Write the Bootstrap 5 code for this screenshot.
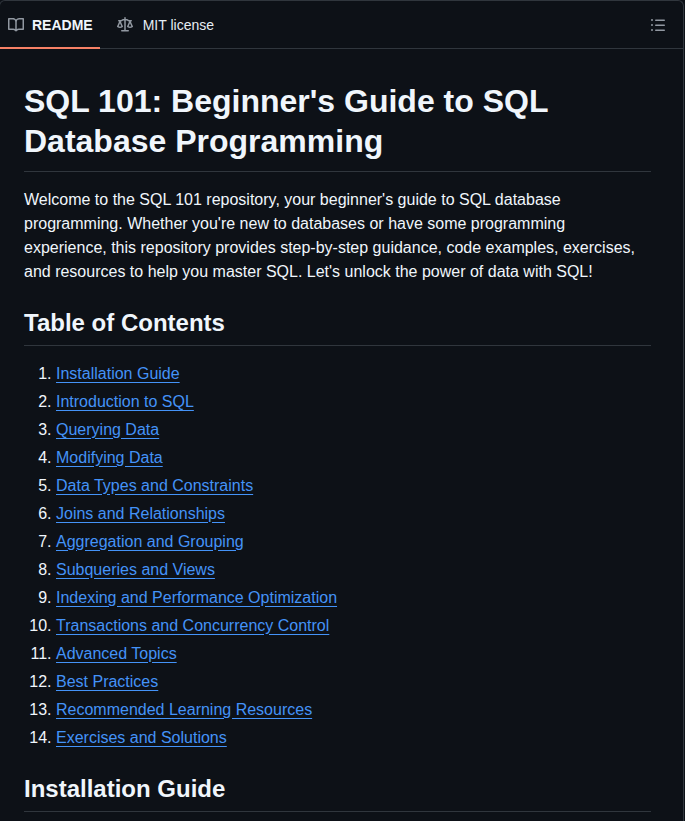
<!DOCTYPE html>
<html lang="en" data-bs-theme="dark">
<head>
    <meta charset="UTF-8">
    <meta name="viewport" content="width=device-width, initial-scale=1.0">
    <title>SQL 101 README</title>
    <link href="https://cdn.jsdelivr.net/npm/bootstrap@5.3.0/dist/css/bootstrap.min.css" rel="stylesheet">
    <style>
        html, body { height: 100%; overflow: hidden; background: #0d1117; }
        body { font-family: "Liberation Sans", Arial, sans-serif; font-size: 16px; line-height: 1.5; color: #e6edf3; }
        .readme-box { width: 685px; margin-left: -1px; height: 100%; border: 1px solid #30363d; border-bottom: 0; border-radius: 6px 6px 0 0; }
        .readme-tabs { height: 48px; border-bottom: 1px solid #30363d; }
        .readme-tab { height: 47px; padding: 1px 8px 0; font-size: 14px; line-height: 21px; color: #e6edf3; text-decoration: none; }
        .readme-tab.active-tab { height: 48px; padding: 2px 7px 0 8px; font-weight: 600; color: #f0f6fc; border-bottom: 2px solid #f78166; margin-bottom: -1px; }
        .tab-second { margin-left: 9px; }
        .tab-second .octicon { margin-right: 10px; }
        .octicon { fill: #9198a1; flex: none; }
        .toc-btn { margin-right: 17px; padding-top: 1px; }
        .readme-body { padding: 32px 32px 0 24px; }
        .readme-body h1, .readme-body h2 { font-weight: 600; line-height: 1.25; color: #f0f6fc; border-bottom: 1px solid #30363d; margin: 24px 0 16px; }
        .readme-body h1 { font-size: 32px; padding-bottom: 9.6px; margin-top: 0; }
        .readme-body h2 { font-size: 24px; padding-bottom: 7.2px; }
        .readme-body p { margin: 0 0 16px; color: #f0f6fc; }
        .readme-body ol { margin: 0 0 16px; padding-left: 32px; color: #f0f6fc; }
        .readme-body li + li { margin-top: 4px; }
        .readme-body a { color: #4493f8; text-decoration: underline; text-underline-offset: .2rem; }
    </style>
</head>
<body>
    <div class="readme-box">
        <div class="readme-tabs d-flex align-items-start justify-content-between">
            <div class="d-flex align-items-start">
                <a href="#" class="readme-tab active-tab d-flex align-items-center">
                    <svg class="octicon me-2" width="16" height="16" viewBox="0 0 16 16"><path d="M0 1.75A.75.75 0 0 1 .75 1h4.253c1.227 0 2.317.59 3 1.501A3.743 3.743 0 0 1 11.006 1h4.245a.75.75 0 0 1 .75.75v10.5a.75.75 0 0 1-.75.75h-4.507a2.25 2.25 0 0 0-1.591.659l-.622.621a.75.75 0 0 1-1.06 0l-.622-.621A2.25 2.25 0 0 0 5.258 13H.75a.75.75 0 0 1-.75-.75Zm7.251 10.324.004-5.073-.002-2.253A2.25 2.25 0 0 0 5.003 2.5H1.5v9h3.757a3.75 3.75 0 0 1 1.994.574ZM8.755 4.75l-.004 7.322a3.752 3.752 0 0 1 1.992-.572H14.5v-9h-3.495a2.25 2.25 0 0 0-2.25 2.25Z"></path></svg>
                    README
                </a>
                <a href="#" class="readme-tab tab-second d-flex align-items-center">
                    <svg class="octicon" width="16" height="16" viewBox="0 0 16 16"><path d="M8.75.75V2h.985c.304 0 .603.08.867.231l1.29.736c.038.022.08.033.124.033h2.234a.75.75 0 0 1 0 1.5h-.427l2.111 4.692a.75.75 0 0 1-.154.838l-.53-.53.529.531-.001.002-.002.002-.006.006-.006.005-.01.01-.045.04c-.21.176-.441.327-.686.45C14.556 10.78 13.88 11 13 11a4.498 4.498 0 0 1-2.023-.454 3.544 3.544 0 0 1-.686-.45l-.045-.04-.016-.015-.006-.006-.004-.004v-.001a.75.75 0 0 1-.154-.838L12.178 4.5h-.162c-.305 0-.604-.079-.868-.231l-1.29-.736a.245.245 0 0 0-.124-.033H8.75V13h2.5a.75.75 0 0 1 0 1.5h-6.5a.75.75 0 0 1 0-1.5h2.5V3.5h-.984a.245.245 0 0 0-.124.033l-1.289.737c-.265.15-.564.23-.869.23h-.162l2.112 4.692a.75.75 0 0 1-.154.838l-.53-.53.529.531-.001.002-.002.002-.006.006-.016.015-.045.04c-.21.176-.441.327-.686.45C4.556 10.78 3.88 11 3 11a4.498 4.498 0 0 1-2.023-.454 3.544 3.544 0 0 1-.686-.45l-.045-.04-.016-.015-.006-.006-.004-.004v-.001a.75.75 0 0 1-.154-.838L2.178 4.5H1.75a.75.75 0 0 1 0-1.5h2.234a.249.249 0 0 0 .125-.033l1.288-.737c.265-.15.564-.23.869-.23h.984V.75a.75.75 0 0 1 1.5 0Zm2.945 8.477c.285.135.718.273 1.305.273s1.02-.138 1.305-.273L13 6.327Zm-10 0c.285.135.718.273 1.305.273s1.02-.138 1.305-.273L3 6.327Z"></path></svg>
                    MIT license
                </a>
            </div>
            <div class="toc-btn d-flex align-items-center align-self-center">
                <svg class="octicon" width="16" height="16" viewBox="0 0 16 16"><path d="M5.75 2.5h8.5a.75.75 0 0 1 0 1.5h-8.5a.75.75 0 0 1 0-1.5Zm0 5h8.5a.75.75 0 0 1 0 1.5h-8.5a.75.75 0 0 1 0-1.5Zm0 5h8.5a.75.75 0 0 1 0 1.5h-8.5a.75.75 0 0 1 0-1.5ZM2 14a1 1 0 1 1 0-2 1 1 0 0 1 0 2Zm1-6a1 1 0 1 1-2 0 1 1 0 0 1 2 0ZM2 4a1 1 0 1 1 0-2 1 1 0 0 1 0 2Z"></path></svg>
            </div>
        </div>
        <div class="readme-body">
            <h1>SQL 101: Beginner's Guide to SQL Database Programming</h1>
            <p>Welcome to the SQL 101 repository, your beginner's guide to SQL database programming. Whether you're new to databases or have some programming experience, this repository provides step-by-step guidance, code examples, exercises, and resources to help you master SQL. Let's unlock the power of data with SQL!</p>
            <h2>Table of Contents</h2>
            <ol>
                <li><a href="#">Installation Guide</a></li>
                <li><a href="#">Introduction to SQL</a></li>
                <li><a href="#">Querying Data</a></li>
                <li><a href="#">Modifying Data</a></li>
                <li><a href="#">Data Types and Constraints</a></li>
                <li><a href="#">Joins and Relationships</a></li>
                <li><a href="#">Aggregation and Grouping</a></li>
                <li><a href="#">Subqueries and Views</a></li>
                <li><a href="#">Indexing and Performance Optimization</a></li>
                <li><a href="#">Transactions and Concurrency Control</a></li>
                <li><a href="#">Advanced Topics</a></li>
                <li><a href="#">Best Practices</a></li>
                <li><a href="#">Recommended Learning Resources</a></li>
                <li><a href="#">Exercises and Solutions</a></li>
            </ol>
            <h2>Installation Guide</h2>
        </div>
    </div>
    <script src="https://cdn.jsdelivr.net/npm/bootstrap@5.3.0/dist/js/bootstrap.bundle.min.js"></script>
</body>
</html>
